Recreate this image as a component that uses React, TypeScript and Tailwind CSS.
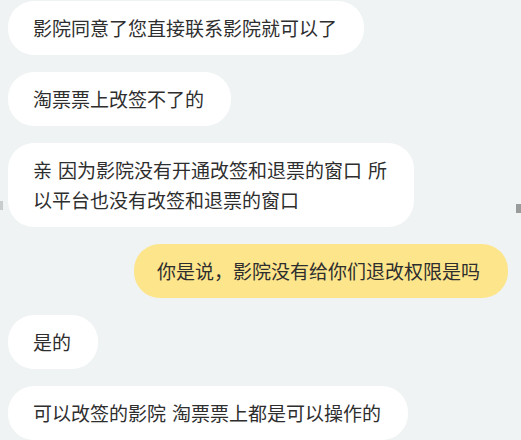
const mensajes = [
    { id: 1, mio: false, lineas: ['影院同意了您直接联系影院就可以了'] },
    { id: 2, mio: false, lineas: ['淘票票上改签不了的'] },
    { id: 3, mio: false, lineas: ['亲 因为影院没有开通改签和退票的窗口 所', '以平台也没有改签和退票的窗口'] },
    { id: 4, mio: true, lineas: ['你是说，影院没有给你们退改权限是吗'] },
    { id: 5, mio: false, lineas: ['是的'] },
    { id: 6, mio: false, lineas: ['可以改签的影院 淘票票上都是可以操作的'] },
];

// Los espacios del original son más anchos que los de la fuente CJK
const Linea = ({ texto }: { texto: string }) => {
    const partes = texto.split(' ');
    return (
        <div>
            {partes.map((p, i) => (
                <span key={i}>
                    {i > 0 && <span className="inline-block w-[6px]" />}
                    {p}
                </span>
            ))}
        </div>
    );
};

const App = () => {
    return (
        <div
            className="relative w-[521px] h-[440px] overflow-hidden bg-[#eff3f3] pt-px px-2"
            style={{ fontFamily: '"Noto Sans CJK SC", "Noto Sans", sans-serif' }}
        >
            <div className="flex flex-col gap-[17px]">
                {mensajes.map((m) => (
                    <div key={m.id} className={m.mio ? 'flex justify-end pr-[5px]' : 'flex justify-start'}>
                        <div
                            className={
                                m.mio
                                    ? 'rounded-[26px] bg-[#fde58b] pl-[23px] pr-[28px] py-3 text-[19px] leading-[30px] text-[#2e2e2e] whitespace-nowrap'
                                    : 'rounded-[26px] bg-white pl-[25px] pr-[27px] py-3 text-[19px] leading-[30px] text-[#2e2e2e] whitespace-nowrap'
                            }
                        >
                            {m.lineas.map((l, i) => (
                                <Linea key={i} texto={l} />
                            ))}
                        </div>
                    </div>
                ))}
            </div>
            {/* marcas de desplazamiento */}
            <div className="absolute left-0 top-[201px] w-[3px] h-[9px] bg-[#c8cccc]" />
            <div className="absolute right-0 top-[204px] w-[5px] h-[9px] bg-[#9a9c9c]" />
        </div>
    );
};

export default App;
